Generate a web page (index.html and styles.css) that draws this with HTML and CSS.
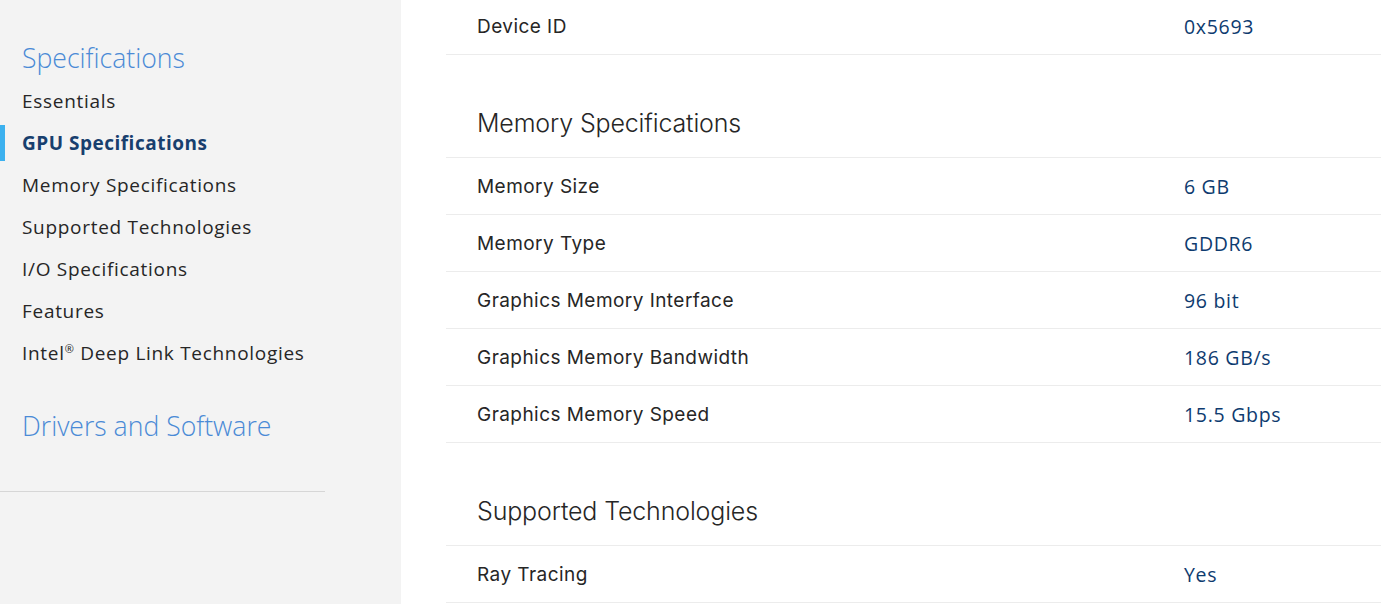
FILE: index.html
```html
<!DOCTYPE html>
<html lang="en">
<head>
<meta charset="utf-8">
<title>Specifications</title>
<link rel="stylesheet" href="styles.css">
</head>
<body>
<div class="page">
  <aside class="sidebar">
    <h2 class="side-title">Specifications</h2>
    <ul class="side-nav">
      <li class="nav-item">Essentials</li>
      <li class="nav-item active">GPU Specifications</li>
      <li class="nav-item">Memory Specifications</li>
      <li class="nav-item">Supported Technologies</li>
      <li class="nav-item">I/O Specifications</li>
      <li class="nav-item">Features</li>
      <li class="nav-item">Intel<sup>®</sup> Deep Link Technologies</li>
    </ul>
    <h2 class="side-title drivers">Drivers and Software</h2>
    <div class="side-sep"></div>
  </aside>
  <main class="content">
    <div class="spec-table">
      <div class="row first"><span class="label">Device ID</span><span class="value">0x5693</span></div>
      <div class="section-head">Memory Specifications</div>
      <div class="row"><span class="label">Memory Size</span><span class="value">6 GB</span></div>
      <div class="row"><span class="label">Memory Type</span><span class="value">GDDR6</span></div>
      <div class="row"><span class="label">Graphics Memory Interface</span><span class="value">96 bit</span></div>
      <div class="row"><span class="label">Graphics Memory Bandwidth</span><span class="value">186 GB/s</span></div>
      <div class="row"><span class="label">Graphics Memory Speed</span><span class="value">15.5 Gbps</span></div>
      <div class="section-head">Supported Technologies</div>
      <div class="row"><span class="label">Ray Tracing</span><span class="value">Yes</span></div>
    </div>
  </main>
</div>
</body>
</html>
```

FILE: styles.css
```css
* { box-sizing: border-box; }
html, body { margin: 0; padding: 0; }
body {
  background: #ffffff;
  font-family: "Open Sans", "Noto Sans", sans-serif;
  color: #262626;
  overflow: hidden;
  height: 604px;
}
.page {
  display: flex;
  min-height: 604px;
}
.sidebar {
  width: 401px;
  flex: 0 0 401px;
  background: #f3f3f3;
  padding-top: 42px;
}
.side-title {
  margin: 0;
  padding-left: 22px;
  font-size: 26.6px;
  line-height: 32px;
  font-weight: 300;
  color: #4a8ad6;
}
.side-nav {
  list-style: none;
  margin: 6px 0 0;
  padding: 0;
}
.nav-item {
  position: relative;
  height: 42px;
  line-height: 42px;
  padding-left: 22px;
  font-size: 19px;
  letter-spacing: 0.7px;
  color: #262626;
}
.nav-item sup {
  font-size: 11px;
  line-height: 0;
  vertical-align: 7px;
}
.nav-item.active {
  font-weight: 700;
  letter-spacing: 0.5px;
  color: #183f6e;
}
.nav-item.active::before {
  content: "";
  position: absolute;
  left: 0;
  top: 3px;
  width: 5px;
  height: 36px;
  background: #3cb1ef;
}
.drivers {
  margin-top: 36px;
}
.side-sep {
  margin-top: 49px;
  width: 325px;
  height: 1px;
  background: #d6d6d6;
}
.content {
  flex: 1;
  padding-left: 45px;
  margin-top: -2px;
}
.spec-table {
  display: flex;
  flex-direction: column;
}
.row {
  display: flex;
  align-items: center;
  height: 57px;
  border-bottom: 1px solid #ececec;
}
.label {
  width: 738px;
  padding-left: 31px;
  font-family: "Inter", "Noto Sans", sans-serif;
  font-size: 19px;
  letter-spacing: 0.45px;
  font-weight: 400;
  color: #262626;
}
.value {
  font-family: "Open Sans", "Noto Sans", sans-serif;
  font-size: 19.5px;
  letter-spacing: 0.7px;
  color: #0e3b6f;
}
.section-head {
  height: 103px;
  padding: 52px 0 0 31px;
  line-height: 32px;
  border-bottom: 1px solid #ececec;
  font-family: "Inter", "Noto Sans", sans-serif;
  font-size: 25px;
  font-weight: 300;
  letter-spacing: -0.15px;
  color: #262626;
}
```
